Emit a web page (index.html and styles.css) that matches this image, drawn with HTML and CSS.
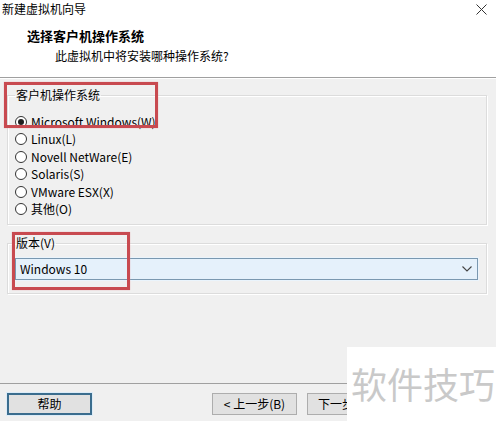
FILE: index.html
```html
<!DOCTYPE html>
<html lang="zh-CN">
<head>
<meta charset="utf-8">
<title>新建虚拟机向导</title>
<link rel="stylesheet" href="styles.css">
</head>
<body>
<div class="top">
  <div class="titlebar">
    <span class="title">新建虚拟机向导</span>
    <svg class="close" width="11" height="11" viewBox="0 0 11 11"><path d="M0.5 0.5 L10.5 10.5 M10.5 0.5 L0.5 10.5" stroke="#333" stroke-width="1" fill="none"/></svg>
  </div>
  <div class="header">
    <h1>选择客户机操作系统</h1>
    <p>此虚拟机中将安装哪种操作系统?</p>
  </div>
</div>
<div class="sep"></div>

<fieldset class="group">
  <legend>客户机操作系统</legend>
  <ul class="radios">
    <li class="radio checked"><span class="dot"></span>Microsoft Windows(W)</li>
    <li class="radio"><span class="dot"></span>Linux(L)</li>
    <li class="radio"><span class="dot"></span>Novell NetWare(E)</li>
    <li class="radio"><span class="dot"></span>Solaris(S)</li>
    <li class="radio"><span class="dot"></span>VMware ESX(X)</li>
    <li class="radio"><span class="dot"></span>其他(O)</li>
  </ul>
</fieldset>

<fieldset class="group group-version">
  <legend>版本(V)</legend>
  <div class="select">
    <span>Windows 10</span>
    <svg width="10" height="6" viewBox="0 0 10 6"><path d="M0.5 0.5 L5 5 L9.5 0.5" stroke="#444" stroke-width="1.1" fill="none"/></svg>
  </div>
</fieldset>

<div class="bottom">
  <button class="btn btn-default">帮助</button>
  <button class="btn btn-back">&lt; 上一步(B)</button>
  <button class="btn btn-next"><span class="next-label">下一步</span></button>
</div>

<div class="mark mark-os"></div>
<div class="mark mark-ver"></div>
<div class="watermark">软件技巧</div>
</body>
</html>
```

FILE: styles.css
```css
html, body {
  margin: 0;
  padding: 0;
}
body {
  width: 496px;
  height: 421px;
  overflow: hidden;
  position: relative;
  background: #f0f0f0;
  font-family: "Noto Sans CJK SC", "Microsoft YaHei", sans-serif;
  font-size: 12px;
  color: #000;
  display: flex;
  flex-direction: column;
}
.top {
  background: #fff;
  height: 77px;
}
.titlebar {
  height: 17px;
  line-height: 17px;
  padding-left: 2px;
  display: flex;
  justify-content: space-between;
  align-items: flex-start;
}
.close {
  margin: 4px 9px 0 0;
}
.header {
  padding-left: 27px;
}
.header h1 {
  margin: 11px 0 0;
  font-size: 13px;
  font-weight: bold;
  line-height: 16px;
}
.header p {
  margin: 4px 0 0 28px;
  line-height: 16px;
}
.sep {
  border-top: 1px solid #a0a0a0;
  border-bottom: 1px solid #fff;
}
.group {
  margin: 8px 9px 0 7px;
  padding: 0 0 6px 7px;
  border: 1px solid #dcdcdc;
  box-shadow: inset 1px 1px 0 #fff, 1px 1px 0 #fff;
  min-width: 0;
}
.group legend {
  padding: 0 1px;
  line-height: 16px;
  font-size: 12px;
}
.radios {
  list-style: none;
  margin: 10px 0 0;
  padding: 0;
}
.radio {
  height: 17.5px;
  display: flex;
  align-items: center;
  gap: 4px;
  line-height: 16px;
}
.dot {
  width: 12px;
  height: 12px;
  box-sizing: border-box;
  border: 1px solid #333;
  border-radius: 50%;
  background: #fff;
  display: flex;
  align-items: center;
  justify-content: center;
  flex: none;
}
.checked .dot::after {
  content: "";
  width: 6px;
  height: 6px;
  border-radius: 50%;
  background: #1e1e1e;
}
.group-version {
  margin-top: 10px;
  padding-bottom: 13px;
}
.select {
  margin: 7px 8px 0 0;
  height: 22px;
  box-sizing: border-box;
  border: 1px solid #7a98b0;
  background: #e5f1fb;
  box-shadow: 0 0 0 1px #eaf4fc;
  display: flex;
  align-items: center;
  justify-content: space-between;
  padding: 0 5px 0 4px;
  line-height: 16px;
}
.bottom {
  margin-top: auto;
  border-top: 1px solid #a0a0a0;
  padding: 9px 0 6px 7px;
  display: flex;
}
.btn {
  width: 85px;
  height: 22px;
  box-sizing: border-box;
  border: 1px solid #adadad;
  background: #e1e1e1;
  font-family: inherit;
  font-size: 12px;
  color: #000;
  padding: 0;
  line-height: 16px;
  flex: none;
}
.btn-default {
  border: 2px solid #3b6d8e;
  box-shadow: 0 0 0 1px #dcecf8;
}
.btn-back {
  margin-left: 120px;
}
.btn-next {
  margin-left: 10px;
  text-align: left;
  padding-left: 10px;
  overflow: hidden;
}
.next-label {
  display: inline-block;
  width: 29px;
  overflow: hidden;
  white-space: nowrap;
  vertical-align: top;
}
.mark {
  position: absolute;
  box-sizing: border-box;
  border: 3px solid #c84a50;
  box-shadow: 0 0 1px #e8a0a4;
}
.mark-os {
  left: 4px;
  top: 82px;
  width: 154px;
  height: 46px;
}
.mark-ver {
  left: 12px;
  top: 232px;
  width: 118px;
  height: 58px;
}
.watermark {
  position: absolute;
  left: 347px;
  top: 347px;
  right: 0;
  bottom: 0;
  background: #fff;
  color: #c9c9c9;
  font-size: 36px;
  line-height: 72px;
  padding-left: 4px;
  white-space: nowrap;
}
```
